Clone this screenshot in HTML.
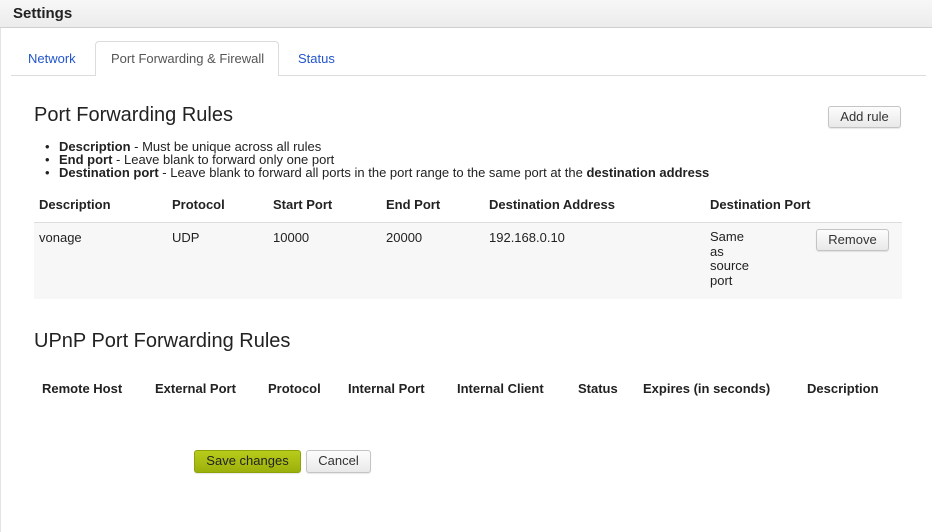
<!DOCTYPE html>
<html><head><meta charset="utf-8"><style>
*{margin:0;padding:0;box-sizing:border-box}
body{width:932px;height:532px;background:#fff;font-family:"Liberation Sans",Arial,sans-serif;color:#222;position:relative;overflow:hidden;font-size:13px}
.a{position:absolute;white-space:nowrap}
.hdr{left:0;top:0;width:932px;height:28px;background:linear-gradient(#f7f7f7,#ececec);border-bottom:1px solid #d0d0d0}
.hdr b{position:absolute;left:13px;top:5px;font-size:15px;color:#222}
.lb{left:0;top:28px;width:1px;height:504px;background:#e4e4e4}
.tabline{left:11px;top:75px;width:915px;height:1px;background:#dcdcdc}
.tab{top:47px;font-size:13px;color:#2255cc}
.acttab{left:95px;top:41px;width:184px;height:35px;border:1px solid #dcdcdc;border-bottom:none;border-radius:4px 4px 0 0;background:#fff}
.btn{border:1px solid #c4c4c4;border-radius:3px;background:linear-gradient(#fdfdfd,#e9e9e9);font-size:13px;color:#333;text-align:center;line-height:20px;box-shadow:0 1px 1px rgba(0,0,0,.1)}
h2{font-weight:normal}
.th{font-weight:bold;font-size:13px;top:197px}
.td{font-size:13px;top:230px}
.uh{font-weight:bold;font-size:13px;top:381px}
.bl div{position:relative;padding-left:20px}
.bl div:before{content:"•";position:absolute;left:6px}
</style></head><body>
<div class="a hdr"><b>Settings</b></div>
<div class="a lb"></div>
<div class="a tabline"></div>
<div class="a acttab"></div>
<div class="a tab" style="left:28px;top:51px">Network</div>
<div class="a tab" style="left:111px;top:51px;color:#555">Port Forwarding &amp; Firewall</div>
<div class="a tab" style="left:298px;top:51px">Status</div>
<h2 class="a" style="left:34px;top:104px;font-size:20px;color:#222">Port Forwarding Rules</h2>
<div class="a btn" style="left:828px;top:106px;width:73px;height:22px">Add rule</div>
<div class="a bl" style="left:39px;top:140px;font-size:13px;line-height:13px">
<div><b>Description</b> - Must be unique across all rules</div>
<div><b>End port</b> - Leave blank to forward only one port</div>
<div><b>Destination port</b> - Leave blank to forward all ports in the port range to the same port at the <b>destination address</b></div>
</div>
<div class="a th" style="left:39px">Description</div>
<div class="a th" style="left:172px">Protocol</div>
<div class="a th" style="left:273px">Start Port</div>
<div class="a th" style="left:386px">End Port</div>
<div class="a th" style="left:489px">Destination Address</div>
<div class="a th" style="left:710px">Destination Port</div>
<div class="a" style="left:34px;top:222px;width:868px;height:77px;background:#f7f7f7;border-top:1px solid #ddd"></div>
<div class="a td" style="left:39px">vonage</div>
<div class="a td" style="left:172px">UDP</div>
<div class="a td" style="left:273px">10000</div>
<div class="a td" style="left:386px">20000</div>
<div class="a td" style="left:489px">192.168.0.10</div>
<div class="a td" style="left:710px;line-height:14.5px">Same<br>as<br>source<br>port</div>
<div class="a btn" style="left:816px;top:229px;width:73px;height:22px">Remove</div>
<h2 class="a" style="left:34px;top:330px;font-size:20px;color:#222">UPnP Port Forwarding Rules</h2>
<div class="a uh" style="left:42px">Remote Host</div>
<div class="a uh" style="left:155px">External Port</div>
<div class="a uh" style="left:268px">Protocol</div>
<div class="a uh" style="left:348px">Internal Port</div>
<div class="a uh" style="left:457px">Internal Client</div>
<div class="a uh" style="left:578px">Status</div>
<div class="a uh" style="left:643px">Expires (in seconds)</div>
<div class="a uh" style="left:807px">Description</div>
<div class="a btn" style="left:194px;top:450px;width:107px;height:23px;background:linear-gradient(#b8cc1a,#9cb00c);border-color:#8ea20a;color:#222">Save changes</div>
<div class="a btn" style="left:306px;top:450px;width:65px;height:23px">Cancel</div>
</body></html>
